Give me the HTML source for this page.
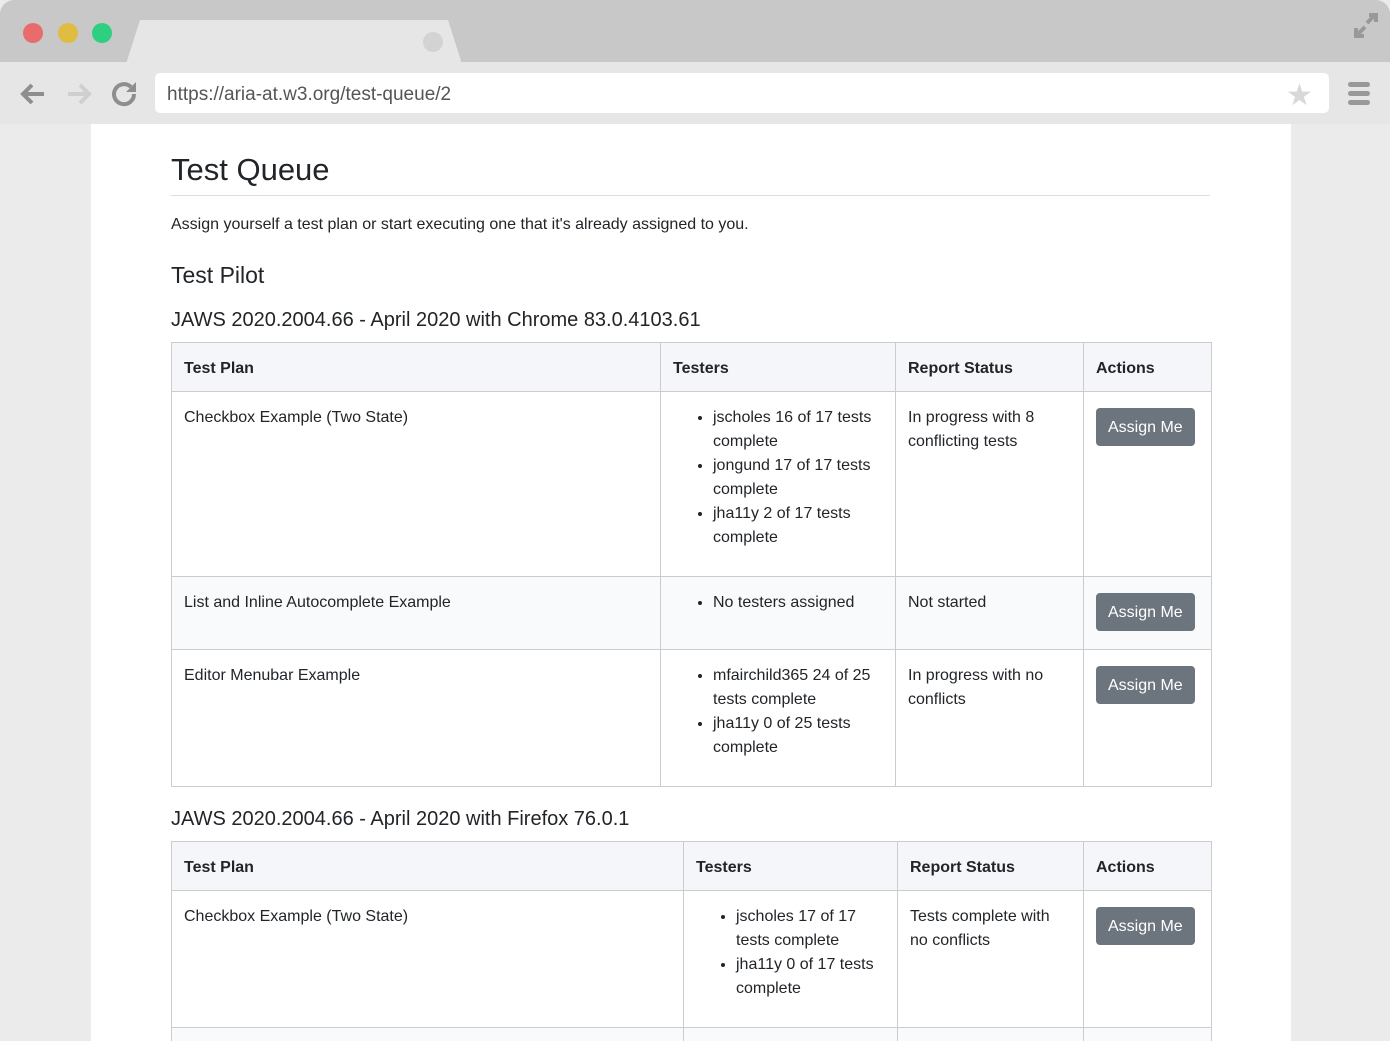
<!DOCTYPE html>
<html style="width:1390px;height:1041px;overflow:hidden"><head><meta charset="utf-8"><style>
*{box-sizing:border-box;margin:0;padding:0}
body{width:1390px;height:1041px;overflow:hidden;background:#ebebeb;font-family:"Liberation Sans",Arial,sans-serif;color:#212529;position:relative}
.top{position:absolute;left:0;top:0;width:1390px;height:62px;background:#c8c8c8;border-radius:14px 14px 0 0}
.tab{position:absolute;left:126px;top:20px;width:336px;height:44px;background:#e6e6e6;clip-path:polygon(0 100%,14px 0,322px 0,100% 100%)}
.dot{position:absolute;top:23px;width:20px;height:20px;border-radius:50%}
.bar{position:absolute;left:0;top:62px;width:1390px;height:62px;background:#e6e6e6}
.url{position:absolute;left:155px;top:73px;width:1174px;height:40px;background:#fff;border-radius:5px;font-size:19px;color:#555;padding:11px 12px 0}
.page{position:absolute;left:91px;top:124px;width:1200px;height:917px;background:#fff}
.abs{position:absolute}
h1{position:absolute;left:171px;top:152px;font-size:31px;font-weight:normal;color:#212529}
.hr{position:absolute;left:171px;top:195px;width:1039px;height:1px;background:#ddd}
table{position:absolute;border-collapse:collapse;font-size:16px;line-height:24px;table-layout:fixed}
td,th{border:1px solid #ccc;vertical-align:top;padding:14px 12px 10px;text-align:left}
th{background:#f4f6f9;font-weight:bold;vertical-align:middle;padding-top:14px;padding-bottom:10px}
ul{padding-left:40px}
.btn{display:inline-block;background:#6c757d;color:#fff;border-radius:4px;padding:8px 12px 6px;font-size:16px;line-height:24px;margin-top:2px}
.stripe td{background:#f9fafb}
</style></head><body>
<div class="top"></div>
<div class="tab"></div>
<div style="position:absolute;left:423px;top:32px;width:20px;height:20px;border-radius:50%;background:#d3d3d3"></div>
<div class="dot" style="left:23px;background:#e96b6b"></div>
<div class="dot" style="left:58px;background:#e0bd40"></div>
<div class="dot" style="left:92px;background:#2fcf82"></div>
<svg class="abs" style="left:1352px;top:12px" width="28" height="26" viewBox="0 0 28 26"><path d="M15 11L23 3M17 3h7v7M13 15L5 23M4 16v8h8" stroke="#999" stroke-width="4" fill="none"/></svg>
<div class="bar"></div>
<svg class="abs" style="left:18px;top:80px" width="120" height="28" viewBox="0 0 120 28"><path d="M26 14H6M14 5l-9 9 9 9" stroke="#8e8e8e" stroke-width="4" fill="none"/><path d="M50 14h20M62 5l9 9-9 9" stroke="#cfcfcf" stroke-width="4" fill="none"/><path d="M116 14a10 10 0 1 1-3-7" stroke="#8e8e8e" stroke-width="4" fill="none"/><path d="M118 2v10h-10z" fill="#8e8e8e"/></svg>
<div class="url">https://aria-at.w3.org/test-queue/2</div>
<div class="abs" style="left:1286px;top:78px;font-size:30px;color:#d8d8d8">★</div>
<div class="abs" style="left:1348px;top:82px;width:22px;height:5px;background:#999;border-radius:3px"></div>
<div class="abs" style="left:1348px;top:91px;width:22px;height:5px;background:#999;border-radius:3px"></div>
<div class="abs" style="left:1348px;top:100px;width:22px;height:5px;background:#999;border-radius:3px"></div>
<div class="page"></div>
<h1>Test Queue</h1>
<div class="hr"></div>
<div class="abs" style="left:171px;top:216px;font-size:16px">Assign yourself a test plan or start executing one that it's already assigned to you.</div>
<div class="abs" style="left:171px;top:262px;font-size:23px">Test Pilot</div>
<div class="abs" style="left:171px;top:309px;font-size:20px">JAWS 2020.2004.66 - April 2020 with Chrome 83.0.4103.61</div>
<table style="left:171px;top:342px;width:1040px">
<colgroup><col style="width:489px"><col style="width:235px"><col style="width:188px"><col style="width:128px"></colgroup>
<tr style="height:49px"><th>Test Plan</th><th>Testers</th><th>Report Status</th><th>Actions</th></tr>
<tr style="height:185px"><td>Checkbox Example (Two State)</td><td><ul><li>jscholes 16 of 17 tests complete</li><li>jongund 17 of 17 tests complete</li><li>jha11y 2 of 17 tests complete</li></ul></td><td>In progress with 8 conflicting tests</td><td><span class="btn">Assign Me</span></td></tr>
<tr class="stripe" style="height:73px"><td>List and Inline Autocomplete Example</td><td><ul><li>No testers assigned</li></ul></td><td>Not started</td><td><span class="btn">Assign Me</span></td></tr>
<tr style="height:137px"><td>Editor Menubar Example</td><td><ul><li>mfairchild365 24 of 25 tests complete</li><li>jha11y 0 of 25 tests complete</li></ul></td><td>In progress with no conflicts</td><td><span class="btn">Assign Me</span></td></tr>
</table>
<div class="abs" style="left:171px;top:808px;font-size:20px">JAWS 2020.2004.66 - April 2020 with Firefox 76.0.1</div>
<table style="left:171px;top:841px;width:1040px">
<colgroup><col style="width:512px"><col style="width:214px"><col style="width:186px"><col style="width:128px"></colgroup>
<tr style="height:49px"><th>Test Plan</th><th>Testers</th><th>Report Status</th><th>Actions</th></tr>
<tr style="height:137px"><td>Checkbox Example (Two State)</td><td><ul><li>jscholes 17 of 17 tests complete</li><li>jha11y 0 of 17 tests complete</li></ul></td><td>Tests complete with no conflicts</td><td><span class="btn">Assign Me</span></td></tr>
</table>
<div class="abs" style="left:171px;top:1027px;width:1041px;height:14px;background:#f9fafb;border-left:1px solid #ccc;border-right:1px solid #ccc;border-top:1px solid #ccc"></div>
<div class="abs" style="left:683px;top:1027px;width:1px;height:14px;background:#ccc"></div>
<div class="abs" style="left:897px;top:1027px;width:1px;height:14px;background:#ccc"></div>
<div class="abs" style="left:1083px;top:1027px;width:1px;height:14px;background:#ccc"></div>
</body></html>
